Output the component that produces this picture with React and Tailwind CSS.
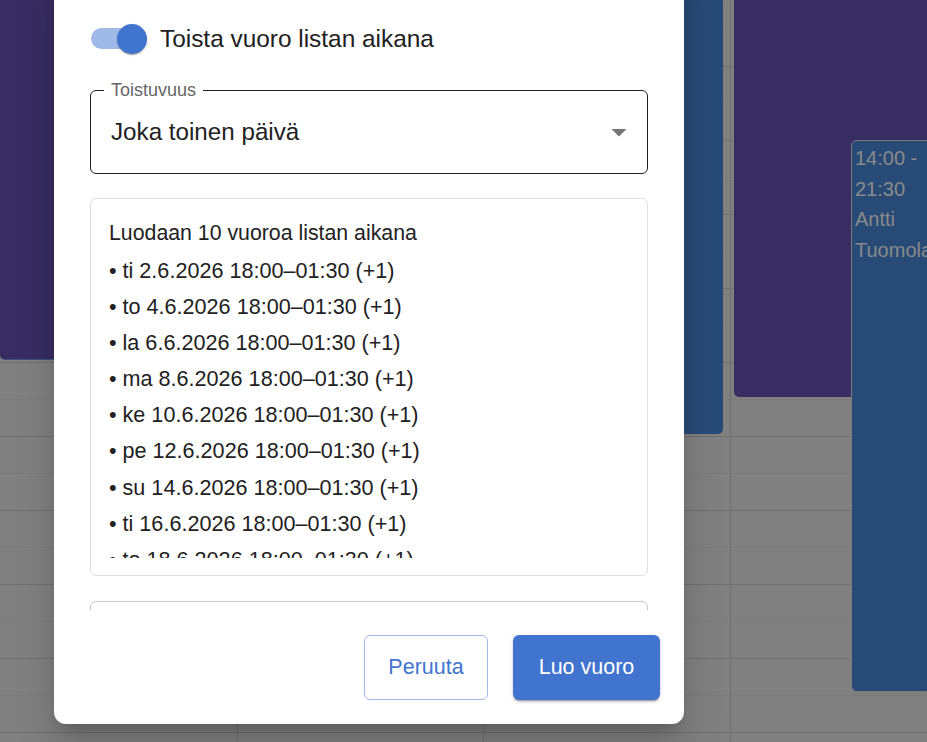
import React from "react";

const rows = Array.from({ length: 11 });

const dates = [
  "ti 2.6.2026",
  "to 4.6.2026",
  "la 6.6.2026",
  "ma 8.6.2026",
  "ke 10.6.2026",
  "pe 12.6.2026",
  "su 14.6.2026",
  "ti 16.6.2026",
  "to 18.6.2026",
  "la 20.6.2026",
];

// hour rows with a dotted half-hour line and a solid hour line
const GridLines = () => (
  <div className="flex flex-col -mt-[7px]">
    {rows.map((_, i) => (
      <div key={i} className="h-[74px] flex flex-col border-b border-[#6f6f6f]">
        <div className="h-[37px] border-b border-dotted border-[#747474]" />
      </div>
    ))}
  </div>
);

const Calendar = () => (
  <div className="grid grid-cols-[237px_246px_247px_246px] w-[976px] h-[742px] overflow-hidden">
    <div className="relative">
      <GridLines />
      <div className="absolute left-0 right-[7px] top-[-10px] h-[370px] rounded-b-[5px] bg-[#372d62] border-b border-[#3e527c]" />
    </div>
    <div className="relative border-l border-[#6f6f6f]">
      <GridLines />
    </div>
    <div className="relative border-l border-[#6f6f6f]">
      <GridLines />
      <div className="absolute left-[6px] right-[7px] top-[-10px] h-[444px] rounded-b-[5px] bg-[#284a76]" />
    </div>
    <div className="relative border-l border-[#6f6f6f]">
      <GridLines />
      <div className="absolute left-[3px] right-0 top-[-10px] h-[407px] rounded-bl-[5px] bg-[#372d62]" />
      <div className="absolute left-[120px] right-0 top-[140px] h-[552px] rounded-l-[6px] border-[1.5px] border-[#7b7b7b] bg-[#284a76] px-[3px] pt-[2px] text-[20px] leading-[30.5px] text-[#8a8a8a]">
        <div>14:00 -</div>
        <div>21:30</div>
        <div>Antti</div>
        <div>Tuomola</div>
      </div>
    </div>
  </div>
);

const Toggle = () => (
  <div className="flex items-center h-[57px] -ml-[17px]">
    <span className="relative w-[87px] h-[57px] shrink-0">
      <span className="absolute left-[18px] top-[18px] w-[51px] h-[21px] rounded-full bg-[#a0bae7]" />
      <span className="absolute left-[43.5px] top-[13.5px] w-[30px] h-[30px] rounded-full bg-[#4174cf] shadow-[0_2px_1px_-1px_rgba(0,0,0,0.2),0_1px_1px_0_rgba(0,0,0,0.14),0_1px_3px_0_rgba(0,0,0,0.12)]" />
    </span>
    <span className="text-[24.4px] leading-[34px] text-[#212121]">Toista vuoro listan aikana</span>
  </div>
);

const RepeatSelect = () => (
  <div className="relative mt-[23px] h-[84px] rounded-[6px] border border-[#1f1f1f] flex items-center pl-[20px]">
    <span className="absolute left-[13px] top-[-11px] px-[7px] bg-white text-[18px] leading-[20px] text-[#666666]">
      Toistuvuus
    </span>
    <span className="text-[24.2px] leading-[24px] text-[#212121]">Joka toinen päivä</span>
    <svg className="absolute right-[10px] top-[23px] w-[36px] h-[36px] text-[#757575]" viewBox="0 0 24 24" fill="currentColor">
      <path d="M7 10l5 5 5-5z" />
    </svg>
  </div>
);

const Preview = () => (
  <div className="mt-[24px] h-[378px] rounded-[6px] border border-[#e0e0e0] px-[18px] pt-[19px] pb-[17px]">
    <div className="h-[340px] overflow-hidden text-[#212121]">
      <div className="text-[21.3px] leading-[30px] mb-[5px]">Luodaan 10 vuoroa listan aikana</div>
      {dates.map((d) => (
        <div key={d} className="text-[21.6px] leading-[36.1px]">
          • {d} 18:00–01:30 (+1)
        </div>
      ))}
    </div>
  </div>
);

export default function App() {
  return (
    <div className="relative w-[927px] h-[742px] overflow-hidden bg-[#808080] font-['Liberation_Sans',Arial,sans-serif]">
      <Calendar />

      <div className="absolute left-[54px] top-[-40px] w-[630px] h-[764px] rounded-[12px] bg-white flex flex-col shadow-[0_11px_15px_-7px_rgba(0,0,0,0.2),0_24px_38px_3px_rgba(0,0,0,0.14)]">
        <div className="flex-1 overflow-hidden px-[36px] pt-[50px]">
          <Toggle />
          <RepeatSelect />
          <Preview />
          <div className="mt-[25px] h-[80px] rounded-t-[6px] border border-[#c8c8c8]" />
        </div>
        <div className="h-[114px] flex items-start justify-end gap-[25px] pt-[25px] pr-[24px]">
          <button className="w-[124px] h-[65px] rounded-[6px] border border-[#a0bae7] text-[21.5px] text-[#4174cf]">
            Peruuta
          </button>
          <button className="w-[147px] h-[65px] rounded-[6px] bg-[#4174cf] text-[21.5px] text-white shadow-[0_3px_1px_-2px_rgba(0,0,0,0.2),0_2px_2px_0_rgba(0,0,0,0.14),0_1px_5px_0_rgba(0,0,0,0.12)]">
            Luo vuoro
          </button>
        </div>
      </div>
    </div>
  );
}
